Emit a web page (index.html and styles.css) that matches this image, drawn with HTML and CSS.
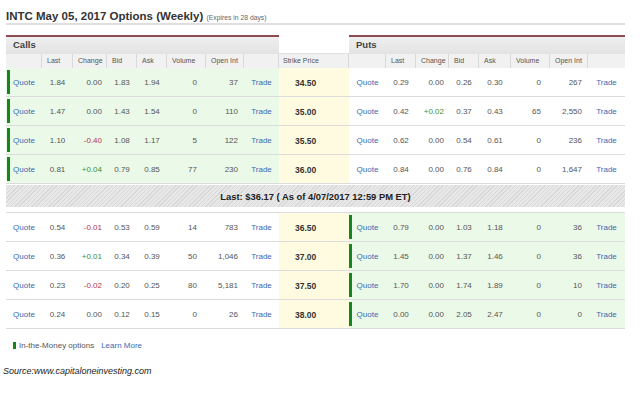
FILE: index.html
```html
<!DOCTYPE html>
<html>
<head>
<meta charset="utf-8">
<title>INTC Options</title>
<link rel="stylesheet" href="styles.css">
</head>
<body>
<div class="page">
  <h1 class="title">INTC May 05, 2017 Options (Weekly) <span class="expires">(Expires in 28 days)</span></h1>

  <div class="chain">
    <div class="row panels">
      <div class="panel">Calls</div>
      <div class="panel-gap"></div>
      <div class="panel">Puts</div>
    </div>

    <div class="row head">
      <div class="side calls">
        <div class="h"></div><div class="h">Last</div><div class="h">Change</div><div class="h">Bid</div><div class="h">Ask</div><div class="h">Volume</div><div class="h">Open Int</div><div class="h"></div>
      </div>
      <div class="h strike-h">Strike Price</div>
      <div class="side puts">
        <div class="h"></div><div class="h">Last</div><div class="h">Change</div><div class="h">Bid</div><div class="h">Ask</div><div class="h">Volume</div><div class="h">Open Int</div><div class="h"></div>
      </div>
    </div>

    <div class="row data">
      <div class="side calls itm"><a class="q">Quote</a><span class="c">1.84</span><span class="r chg">0.00</span><span class="c">1.83</span><span class="c">1.94</span><span class="r vol">0</span><span class="r oi">37</span><a class="t">Trade</a></div>
      <div class="strike">34.50</div>
      <div class="side puts"><a class="q">Quote</a><span class="c">0.29</span><span class="r chg">0.00</span><span class="c">0.26</span><span class="c">0.30</span><span class="r vol">0</span><span class="r oi">267</span><a class="t">Trade</a></div>
    </div>
    <div class="row data">
      <div class="side calls itm"><a class="q">Quote</a><span class="c">1.47</span><span class="r chg">0.00</span><span class="c">1.43</span><span class="c">1.54</span><span class="r vol">0</span><span class="r oi">110</span><a class="t">Trade</a></div>
      <div class="strike">35.00</div>
      <div class="side puts"><a class="q">Quote</a><span class="c">0.42</span><span class="r chg up">+0.02</span><span class="c">0.37</span><span class="c">0.43</span><span class="r vol">65</span><span class="r oi">2,550</span><a class="t">Trade</a></div>
    </div>
    <div class="row data">
      <div class="side calls itm"><a class="q">Quote</a><span class="c">1.10</span><span class="r chg down">-0.40</span><span class="c">1.08</span><span class="c">1.17</span><span class="r vol">5</span><span class="r oi">122</span><a class="t">Trade</a></div>
      <div class="strike">35.50</div>
      <div class="side puts"><a class="q">Quote</a><span class="c">0.62</span><span class="r chg">0.00</span><span class="c">0.54</span><span class="c">0.61</span><span class="r vol">0</span><span class="r oi">236</span><a class="t">Trade</a></div>
    </div>
    <div class="row data">
      <div class="side calls itm"><a class="q">Quote</a><span class="c">0.81</span><span class="r chg up">+0.04</span><span class="c">0.79</span><span class="c">0.85</span><span class="r vol">77</span><span class="r oi">230</span><a class="t">Trade</a></div>
      <div class="strike">36.00</div>
      <div class="side puts"><a class="q">Quote</a><span class="c">0.84</span><span class="r chg">0.00</span><span class="c">0.76</span><span class="c">0.84</span><span class="r vol">0</span><span class="r oi">1,647</span><a class="t">Trade</a></div>
    </div>

    <div class="band">Last: $36.17 ( As of 4/07/2017 12:59 PM ET)</div>

    <div class="lower">
      <div class="row data">
        <div class="side calls"><a class="q">Quote</a><span class="c">0.54</span><span class="r chg down">-0.01</span><span class="c">0.53</span><span class="c">0.59</span><span class="r vol">14</span><span class="r oi">783</span><a class="t">Trade</a></div>
        <div class="strike">36.50</div>
        <div class="side puts itm"><a class="q">Quote</a><span class="c">0.79</span><span class="r chg">0.00</span><span class="c">1.03</span><span class="c">1.18</span><span class="r vol">0</span><span class="r oi">36</span><a class="t">Trade</a></div>
      </div>
      <div class="row data">
        <div class="side calls"><a class="q">Quote</a><span class="c">0.36</span><span class="r chg up">+0.01</span><span class="c">0.34</span><span class="c">0.39</span><span class="r vol">50</span><span class="r oi">1,046</span><a class="t">Trade</a></div>
        <div class="strike">37.00</div>
        <div class="side puts itm"><a class="q">Quote</a><span class="c">1.45</span><span class="r chg">0.00</span><span class="c">1.37</span><span class="c">1.46</span><span class="r vol">0</span><span class="r oi">36</span><a class="t">Trade</a></div>
      </div>
      <div class="row data">
        <div class="side calls"><a class="q">Quote</a><span class="c">0.23</span><span class="r chg down">-0.02</span><span class="c">0.20</span><span class="c">0.25</span><span class="r vol">80</span><span class="r oi">5,181</span><a class="t">Trade</a></div>
        <div class="strike">37.50</div>
        <div class="side puts itm"><a class="q">Quote</a><span class="c">1.70</span><span class="r chg">0.00</span><span class="c">1.74</span><span class="c">1.89</span><span class="r vol">0</span><span class="r oi">10</span><a class="t">Trade</a></div>
      </div>
      <div class="row data">
        <div class="side calls"><a class="q">Quote</a><span class="c">0.24</span><span class="r chg">0.00</span><span class="c">0.12</span><span class="c">0.15</span><span class="r vol">0</span><span class="r oi">26</span><a class="t">Trade</a></div>
        <div class="strike">38.00</div>
        <div class="side puts itm"><a class="q">Quote</a><span class="c">0.00</span><span class="r chg">0.00</span><span class="c">2.05</span><span class="c">2.47</span><span class="r vol">0</span><span class="r oi">0</span><a class="t">Trade</a></div>
      </div>
    </div>
  </div>

  <div class="legend"><span class="swatch"></span><span>In-the-Money options</span><a class="learn">Learn More</a></div>
</div>
<p class="source">Source:www.capitaloneinvesting.com</p>
</body>
</html>
```

FILE: styles.css
```css
* { box-sizing: border-box; }

body {
  margin: 0;
  background: #fff;
  font-family: "Liberation Sans", Arial, sans-serif;
  color: #555;
}

.page {
  width: 640px;
  padding: 0 15px 0 6px;
}

.title {
  margin: 0;
  padding-top: 9px;
  height: 25px;
  line-height: 14px;
  font-size: 11.5px;
  font-weight: bold;
  color: #333;
  border-bottom: 2px solid #dedede;
  white-space: nowrap;
}

.expires {
  font-size: 6.8px;
  font-weight: normal;
  color: #666;
}

.chain {
  margin-top: 10px;
}

.row {
  display: grid;
  grid-template-columns: 273px 70px 276px;
}

.side {
  display: grid;
  position: relative;
}

.calls {
  grid-template-columns: 36px 31px 34px 30px 30px 39px 38px 35px;
}

.puts {
  grid-template-columns: 37px 30px 33px 30px 32px 39px 38px 37px;
}

/* panel titles */
.panel {
  height: 18px;
  border-top: 2px solid #8c4a53;
  background: linear-gradient(#efefef, #e4e4e4);
  padding-left: 7px;
  line-height: 16px;
  font-size: 9.5px;
  font-weight: bold;
  color: #444;
}

/* column headers */
.head {
  height: 15px;
  background: #f1f1f1;
  border-top: 1px solid #e2e2e2;
}

.h {
  height: 14px;
  line-height: 14px;
  font-size: 7px;
  color: #555;
  padding-left: 5px;
  border-right: 1px solid #d9d9d9;
  white-space: nowrap;
}

.puts .h:last-child { border-right: none; }

.strike-h {
  padding-left: 4px;
}

/* data rows */
.data {
  height: 29px;
  border-bottom: 1px solid #dcdcdc;
}

.data .side > * {
  padding-top: 2px;
  line-height: 26px;
  font-size: 8px;
  color: #555;
  white-space: nowrap;
}

.itm { background: #ebf9e9; }

.itm::before {
  content: "";
  position: absolute;
  top: 2px;
  bottom: 2px;
  width: 3px;
  background: #15851c;
}

.calls.itm::before { left: 1px; }
.puts.itm::before { left: 0; }

.data .q, .data .t, .learn {
  color: #3b69b0;
  text-decoration: none;
}

.q, .t, .c { text-align: center; }
.r { text-align: right; }
.data .chg { padding-right: 5px; }
.data .vol { padding-right: 9px; }
.data .oi { padding-right: 6px; }

.data .up { color: #3a8f3a; }
.data .down { color: #b83448; }

.strike {
  background: #fffbe1;
  padding-top: 2px;
  line-height: 26px;
  font-size: 8.5px;
  font-weight: bold;
  color: #333;
  padding-left: 16px;
}

/* last price band */
.band {
  height: 22px;
  margin: 1px 0 5px;
  background: repeating-linear-gradient(135deg, #d8d8d8 0, #d8d8d8 1px, #e8e8e8 1px, #e8e8e8 3px);
  text-align: center;
  padding-top: 1px;
  line-height: 21px;
  font-size: 9.4px;
  font-weight: bold;
  color: #222;
  white-space: nowrap;
}

.lower {
  border-top: 1px solid #dcdcdc;
}

/* legend */
.legend {
  margin-top: 10px;
  height: 12px;
  display: flex;
  align-items: center;
  font-size: 8px;
  color: #555;
  white-space: nowrap;
}

.swatch {
  width: 3px;
  height: 7px;
  margin: 0 3px 0 7px;
  background: #15851c;
}

.learn { margin-left: 7px; }

.source {
  margin: 14px 0 0 3px;
  line-height: 12px;
  font-size: 9px;
  font-style: italic;
  color: #222;
}
```
